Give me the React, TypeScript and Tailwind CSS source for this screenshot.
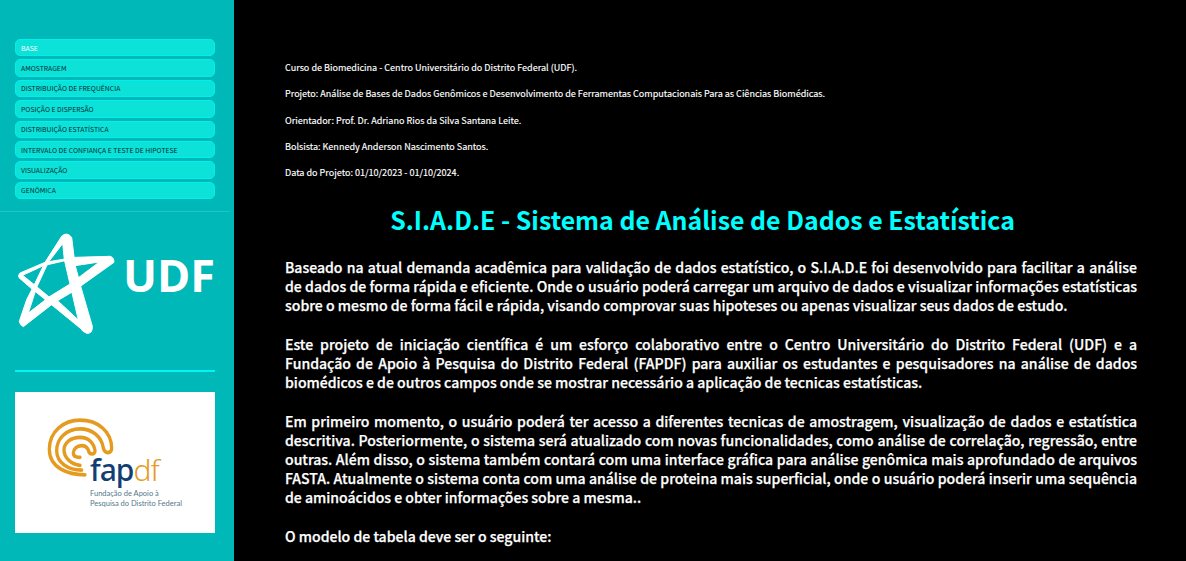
import { FC } from 'react';

const menu = [
  'BASE',
  'AMOSTRAGEM',
  'DISTRIBUIÇÃO DE FREQUÊNCIA',
  'POSIÇÃO E DISPERSÃO',
  'DISTRIBUIÇÃO ESTATÍSTICA',
  'INTERVALO DE CONFIANÇA E TESTE DE HIPOTESE',
  'VISUALIZAÇÃO',
  'GENÔMICA',
];

const credits = [
  'Curso de Biomedicina - Centro Universitário do Distrito Federal (UDF).',
  'Projeto: Análise de Bases de Dados Genômicos e Desenvolvimento de Ferramentas Computacionais Para as Ciências Biomédicas.',
  'Orientador: Prof. Dr. Adriano Rios da Silva Santana Leite.',
  'Bolsista: Kennedy Anderson Nascimento Santos.',
  'Data do Projeto: 01/10/2023 - 01/10/2024.',
];

const paragraphs = [
  'Baseado na atual demanda acadêmica para validação de dados estatístico, o S.I.A.D.E foi desenvolvido para facilitar a análise de dados de forma rápida e eficiente. Onde o usuário poderá carregar um arquivo de dados e visualizar informações estatísticas sobre o mesmo de forma fácil e rápida, visando comprovar suas hipoteses ou apenas visualizar seus dados de estudo.',
  'Este projeto de iniciação científica é um esforço colaborativo entre o Centro Universitário do Distrito Federal (UDF) e a Fundação de Apoio à Pesquisa do Distrito Federal (FAPDF) para auxiliar os estudantes e pesquisadores na análise de dados biomédicos e de outros campos onde se mostrar necessário a aplicação de tecnicas estatísticas.',
  'Em primeiro momento, o usuário poderá ter acesso a diferentes tecnicas de amostragem, visualização de dados e estatística descritiva. Posteriormente, o sistema será atualizado com novas funcionalidades, como análise de correlação, regressão, entre outras. Além disso, o sistema também contará com uma interface gráfica para análise genômica mais aprofundado de arquivos FASTA. Atualmente o sistema conta com uma análise de proteina mais superficial, onde o usuário poderá inserir uma sequência de aminoácidos e obter informações sobre a mesma..',
];

const UdfLogo: FC = () => (
  <div className="flex items-center">
    <svg viewBox="0 0 330 330" className="h-[110px] w-[110px] shrink-0" fill="white" stroke="white" strokeWidth="3" strokeLinejoin="round">
      <path d="M155 25 Q170 10 185 28 L195 110 L215 185 L247 295 Q248 318 230 316 Q215 310 210 298 L185 190 L163 95 L158 45 Z" />
      <path d="M28 280 Q30 292 40 296 L130 226 L190 190 L312 103 Q312 86 298 85 L268 102 L180 168 L120 205 L55 255 Z" />
      <path d="M300 85 L195 88 L105 103 L30 135 Q22 143 28 150 L38 142 L100 113 L165 98 L195 113 L268 102 Z" />
      <path d="M28 150 L60 178 L100 210 L210 300 L225 312 L220 290 L145 220 L115 205 L75 172 L38 142 Z" />
      <path d="M155 25 L105 103 L72 172 L50 215 L28 280 L55 255 L80 178 L115 103 L157 48 Z" />
    </svg>
    <span className="-mt-[17px] ml-[3px] font-['Open_Sans'] text-[45px] leading-none font-bold text-white">UDF</span>
  </div>
);

const FapLogo: FC = () => (
  <div className="flex h-[141px] w-[200px] flex-col bg-white pt-[18px] pl-[25px]">
    <svg viewBox="0 0 240 195" preserveAspectRatio="none" className="h-[71px] w-[80px]" fill="none" stroke="#e59b1f" strokeWidth="10" strokeLinecap="round" strokeLinejoin="round">
      <path d="M135 178 C85 178 28 160 28 108 C28 60 70 28 120 28 C175 28 215 60 215 105 C215 120 195 122 190 105 C185 72 155 52 120 52 C80 52 50 78 50 112 C50 145 85 165 125 165" />
      <path d="M120 152 C95 150 72 132 72 110 C72 88 95 75 120 75 C145 75 162 90 165 112 C165 124 148 124 145 110 C140 100 132 98 125 98 C110 98 100 108 100 118 C100 126 108 130 120 130" />
    </svg>
    <div className="-mt-[24px] ml-[50px] font-['Noto_Sans'] text-[30px] leading-[26px] font-medium tracking-[-1px]">
      <span className="text-[#123f73]">fap</span>
      <span className="font-light text-[#e59b1f]">df</span>
    </div>
    <p className="mt-[6px] ml-[50px] font-['Lato'] text-[7.5px] leading-[10px] whitespace-nowrap text-[#52788a]">
      Fundação de Apoio à<br />Pesquisa do Distrito Federal
    </p>
  </div>
);

export default function App() {
  return (
    <div className="flex h-screen overflow-hidden bg-black font-['Noto_Sans_CJK_SC','Noto_Sans',sans-serif]">
      {/* Sidebar */}
      <aside className="w-[234px] shrink-0 bg-[#00b8b8] pt-[39px]">
        <nav className="flex flex-col gap-[3px] pr-[19px] pl-[15px]">
          {menu.map((item, i) => (
            <a
              key={item}
              className={`flex h-[17.4px] items-center rounded-[5px] border-[1.5px] border-[#00f0f0] bg-[#0ce2d8] pl-[5px] text-[6.83px] font-normal whitespace-nowrap ${
                i === 0 ? 'text-white' : 'text-[#052c34]'
              }`}
            >
              {item}
            </a>
          ))}
        </nav>
        <div className="mt-[12px] h-px w-[230px] bg-[#1fc4c4]" />
        <div className="mt-[16px] pl-[10px]">
          <UdfLogo />
        </div>
        <div className="mt-[32px] mr-[19px] ml-[15px] h-[1.5px] bg-[#00f5f5]" />
        <div className="mt-[20px] pl-[15px]">
          <FapLogo />
        </div>
      </aside>

      {/* Conteudo */}
      <main className="min-w-0 flex-1 pt-[59px] pr-[49px] pl-[51px]">
        <div className="flex flex-col gap-[10.3px]">
          {credits.map((line) => (
            <p key={line} className="text-[9.06px] leading-[16px] text-white [-webkit-text-stroke:0.15px_white]">{line}</p>
          ))}
        </div>
        <h1 className="mt-[19px] pr-[17px] text-center text-[24.9px] leading-[40px] font-bold text-[#00ffff]">
          S.I.A.D.E - Sistema de Análise de Dados e Estatística
        </h1>
        <div className="mt-[19px] flex flex-col gap-[20px]">
          {paragraphs.map((text) => (
            <p key={text} className="text-justify text-[14.05px] leading-[19px] font-medium text-white [-webkit-text-stroke:0.25px_white]">{text}</p>
          ))}
          <p className="text-[14.05px] leading-[19px] font-medium text-white [-webkit-text-stroke:0.25px_white]">O modelo de tabela deve ser o seguinte:</p>
        </div>
      </main>
    </div>
  );
}
